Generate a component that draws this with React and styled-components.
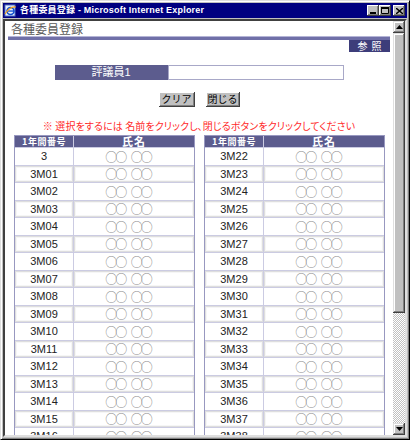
import React from 'react';
import styled, {createGlobalStyle} from 'styled-components';

const GlobalStyle = createGlobalStyle`
  html, body {
    margin: 0;
    padding: 0;
    background: #c0c0c0;
  }
  body {
    font-family: "Liberation Sans", "Noto Sans CJK JP", sans-serif;
  }
`;

const Window = styled.div`
  box-sizing: border-box;
  width: 410px;
  height: 440px;
  background: #c0c0c0;
  border: 1px solid;
  border-color: #dfdfdf #000 #000 #dfdfdf;
  box-shadow: inset 1px 1px 0 #fff, inset -1px -1px 0 #808080;
  padding: 2px;
  display: flex;
  flex-direction: column;
`;

const TitleBar = styled.div`
  height: 15px;
  background: #000080;
  display: flex;
  align-items: center;
  padding: 0 2px 0 1px;
`;

const TitleText = styled.div`
  flex: 1;
  margin-left: 3px;
  color: #fff;
  font-weight: bold;
  font-size: 9px;
  letter-spacing: 0.2px;
  line-height: 15px;
  white-space: nowrap;
`;

const CaptionButton = styled.div`
  box-sizing: border-box;
  width: 12px;
  height: 11px;
  margin-left: ${(p) => (p.$apart ? '2px' : '0')};
  background: #c0c0c0;
  box-shadow: inset -1px -1px 0 #404040, inset 1px 1px 0 #fff,
    inset -2px -2px 0 #808080;
  display: flex;
  align-items: center;
  justify-content: center;
`;

const Viewport = styled.div`
  flex: 1;
  margin-top: 1px;
  display: flex;
  border: 2px solid;
  border-color: #404040 #dfdfdf #dfdfdf #404040;
  min-height: 0;
`;

const Page = styled.div`
  flex: 1;
  background: #fff;
  overflow: hidden;
`;

const Scrollbar = styled.div`
  width: 12px;
  display: flex;
  flex-direction: column;
  background-color: #e8e8e8;
  background-image: repeating-conic-gradient(#c0c0c0 0 25%, #fff 0 50%);
  background-size: 2px 2px;
`;

const ScrollButton = styled.div`
  box-sizing: border-box;
  height: 12px;
  background: #c0c0c0;
  box-shadow: inset -1px -1px 0 #404040, inset 1px 1px 0 #dfdfdf,
    inset -2px -2px 0 #808080, inset 2px 2px 0 #fff;
  display: flex;
  align-items: center;
  justify-content: center;
`;

const ScrollThumb = styled.div`
  box-sizing: border-box;
  height: ${(p) => p.$size}px;
  background: #c0c0c0;
  box-shadow: inset -1px -1px 0 #404040, inset 1px 1px 0 #dfdfdf,
    inset -2px -2px 0 #808080, inset 2px 2px 0 #fff;
`;

const ScrollTrack = styled.div`
  flex: 1;
`;

const Heading = styled.div`
  height: 15px;
  padding-left: 6px;
  font-family: "Noto Sans CJK JP", sans-serif;
  font-size: 12px;
  line-height: 15px;
  color: #5a5a5a;
`;

const Band = styled.div`
  margin: 0 3px;
  height: 3px;
  border-top: 1px solid #b4b4d6;
  background: #7070a8;
`;

const ToolRow = styled.div`
  display: flex;
  justify-content: flex-end;
  margin-right: 3px;
`;

const RefButton = styled.div`
  width: 41px;
  height: 12px;
  background: #3d3d7a;
  color: #fff;
  font-family: "Noto Sans CJK JP", sans-serif;
  font-size: 10px;
  line-height: 12px;
  text-align: center;
  letter-spacing: 4px;
  text-indent: 4px;
`;

const FieldRow = styled.div`
  margin-top: 13px;
  display: flex;
  justify-content: center;
`;

const FieldLabel = styled.div`
  width: 113px;
  height: 15px;
  background: #5c5c8e;
  color: #fff;
  font-size: 11px;
  line-height: 15px;
  text-align: center;
`;

const FieldInput = styled.div`
  box-sizing: border-box;
  width: 176px;
  height: 15px;
  border: 1px solid #a8a8c8;
  background: #fff;
`;

const ButtonRow = styled.div`
  margin-top: 12px;
  display: flex;
  justify-content: center;
  gap: 11px;
`;

const Button = styled.div`
  box-sizing: border-box;
  width: ${(p) => p.$w}px;
  height: 15px;
  background: #c0c0c0;
  box-shadow: inset -1px -1px 0 #404040, inset 1px 1px 0 #fff,
    inset -2px -2px 0 #808080;
  font-family: "Noto Sans CJK JP", sans-serif;
  font-size: 10px;
  line-height: 14px;
  text-align: center;
  color: #000;
`;

const Notice = styled.div`
  margin-top: 14px;
  height: 10px;
  display: flex;
  justify-content: center;
  font-family: "Noto Sans CJK JP", sans-serif;
  font-feature-settings: "palt";
  font-size: 10px;
  letter-spacing: 0.1px;
  line-height: 10px;
  color: #ff2b2b;
  white-space: nowrap;
`;

const Tables = styled.div`
  margin-top: 4px;
  display: flex;
  gap: 9px;
  padding: 0 8px 0 9px;
`;

const Table = styled.div`
  width: 181px;
  box-sizing: border-box;
  border: 1px solid #9898c0;
  display: grid;
  grid-template-columns: 58px 1fr;
  grid-template-rows: 11px;
  grid-auto-rows: 16.5px;
  gap: 1px;
  background: #cbcbe2;
`;

const HeadCell = styled.div`
  background: #5c5c8e;
  color: #fff;
  font-weight: bold;
  font-family: "Noto Sans CJK JP", sans-serif;
  font-size: ${(p) => (p.$big ? 11 : 9)}px;
  letter-spacing: ${(p) => (p.$big ? 1 : 0.5)}px;
  line-height: 11px;
  text-align: center;
  white-space: nowrap;
`;

const Cell = styled.div`
  background: #fff;
  display: flex;
  align-items: center;
  justify-content: center;
  font-size: 11px;
  color: #222;
  box-shadow: ${(p) =>
    p.$odd ? 'inset 0 0 0 1px #dedede, inset 0 0 0 2px #f6f6f6' : 'none'};
`;

const NameCell = styled(Cell)`
  font-family: "Noto Sans CJK JP", sans-serif;
  font-size: 12px;
  letter-spacing: -2px;
  word-spacing: 5px;
  color: #8a8a8a;
  padding-right: 12px;
`;

function IeIcon() {
  return (
    <svg width="13" height="13" viewBox="0 0 13 13">
      <rect x="1" y="1" width="10" height="11" fill="#e8f0ff" stroke="#5070c0" />
      <circle cx="6.5" cy="7" r="3.5" fill="none" stroke="#1050d0" strokeWidth="1.6" />
      <rect x="3" y="6.4" width="7" height="1.3" fill="#1050d0" />
      <path d="M1 10 Q6 2 12 3" fill="none" stroke="#f0a020" strokeWidth="1.2" />
    </svg>
  );
}

function Arrow({up}) {
  return (
    <svg width="7" height="4" viewBox="0 0 7 4">
      <path d={up ? 'M3.5 0 L7 4 L0 4 Z' : 'M0 0 L7 0 L3.5 4 Z'} fill="#000" />
    </svg>
  );
}

function DataTable({rows}) {
  return (
    <Table>
      <HeadCell>1年間番号</HeadCell>
      <HeadCell $big>氏名</HeadCell>
      {rows.map((r, i) => (
        <React.Fragment key={r}>
          <Cell $odd={i % 2 === 1}>{r}</Cell>
          <NameCell $odd={i % 2 === 1}>○○ ○○</NameCell>
        </React.Fragment>
      ))}
    </Table>
  );
}

const pad = (n) => (n < 10 ? '0' + n : '' + n);
const leftRows = ['3'].concat(
  Array.from({length: 16}, (_, i) => '3M' + pad(i + 1))
);
const rightRows = Array.from({length: 17}, (_, i) => '3M' + pad(i + 22));

export default function App() {
  return (
    <>
      <GlobalStyle />
      <Window>
        <TitleBar>
          <IeIcon />
          <TitleText>各種委員登録 - Microsoft Internet Explorer</TitleText>
          <CaptionButton>
            <svg width="6" height="6" viewBox="0 0 6 6">
              <rect x="0" y="4" width="6" height="2" fill="#000" />
            </svg>
          </CaptionButton>
          <CaptionButton>
            <svg width="8" height="7" viewBox="0 0 8 7">
              <path d="M0.5 1.5 H7.5 V6.5 H0.5 Z" fill="none" stroke="#000" />
              <rect x="0" y="0" width="8" height="2" fill="#000" />
            </svg>
          </CaptionButton>
          <CaptionButton $apart>
            <svg width="7" height="6" viewBox="0 0 7 6">
              <path d="M0 0 L7 6 M7 0 L0 6" stroke="#000" strokeWidth="1.4" />
            </svg>
          </CaptionButton>
        </TitleBar>
        <Viewport>
          <Page>
            <Heading>各種委員登録</Heading>
            <Band />
            <ToolRow>
              <RefButton>参照</RefButton>
            </ToolRow>
            <FieldRow>
              <FieldLabel>評議員1</FieldLabel>
              <FieldInput />
            </FieldRow>
            <ButtonRow>
              <Button $w={36}>クリア</Button>
              <Button $w={34}>閉じる</Button>
            </ButtonRow>
            <Notice>
              ※ 選択をするには 名前をクリックし、閉じるボタンをクリックしてください
            </Notice>
            <Tables>
              <DataTable rows={leftRows} />
              <DataTable rows={rightRows} />
            </Tables>
          </Page>
          <Scrollbar>
            <ScrollButton>
              <Arrow up />
            </ScrollButton>
            <ScrollThumb $size={280} />
            <ScrollTrack />
            <ScrollButton>
              <Arrow />
            </ScrollButton>
          </Scrollbar>
        </Viewport>
      </Window>
    </>
  );
}
